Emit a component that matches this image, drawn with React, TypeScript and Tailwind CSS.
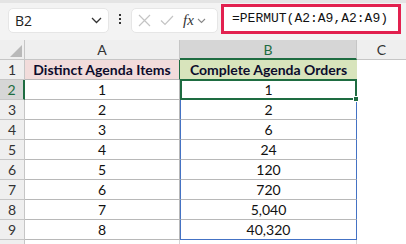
import React from 'react';

const rows = [
  { n: 1, a: 'Distinct Agenda Items', b: 'Complete Agenda Orders' },
  { n: 2, a: '1', b: '1' },
  { n: 3, a: '2', b: '2' },
  { n: 4, a: '3', b: '6' },
  { n: 5, a: '4', b: '24' },
  { n: 6, a: '5', b: '120' },
  { n: 7, a: '6', b: '720' },
  { n: 8, a: '7', b: '5,040' },
  { n: 9, a: '8', b: '40,320' },
];

const font = { fontFamily: 'Lato, "Open Sans", sans-serif' };

export default function App() {
  return (
    <div className="w-[406px] h-[244px] overflow-hidden bg-white text-[#111]" style={font}>
      {/* formula bar */}
      <div className="h-[40px] bg-[#f3f3f3] border-t-[3px] border-[#e4e4e4] flex items-start">
        <div className="ml-[8px] mt-[5px] w-[101px] h-[25px] bg-white rounded-[5px] border border-[#e6e6e6] flex items-center justify-between px-[6px]">
          <span className="text-[14px] text-[#222]" style={{ fontFamily: '"Open Sans", sans-serif' }}>B2</span>
          <svg width="11" height="7" viewBox="0 0 11 7"><path d="M1 1l4.5 4.5L10 1" fill="none" stroke="#333" strokeWidth="1.3" /></svg>
        </div>
        <div className="w-[22px] mt-[11px] flex flex-col items-center gap-[2px]">
          <span className="w-[2px] h-[2px] bg-[#333]" />
          <span className="w-[2px] h-[2px] bg-[#333]" />
          <span className="w-[2px] h-[2px] bg-[#333]" />
        </div>
        <div className="mt-[5px] w-[87px] h-[25px] bg-white rounded-[5px] border border-[#e6e6e6] flex items-center pl-[6px] gap-[9px]">
          <svg width="13" height="13" viewBox="0 0 13 13"><path d="M1 1l11 11M12 1L1 12" stroke="#c4c4c4" strokeWidth="1.2" /></svg>
          <svg width="14" height="11" viewBox="0 0 14 11"><path d="M1 5.5l4 4L13 1" fill="none" stroke="#c4c4c4" strokeWidth="1.2" /></svg>
          <span className="flex items-center gap-[3px]">
            <span className="italic text-[15px] text-[#333] leading-none" style={{ fontFamily: '"Liberation Serif", serif' }}>fx</span>
            <svg width="9" height="6" viewBox="0 0 9 6"><path d="M1 1l3.5 3.5L8 1" fill="none" stroke="#888" strokeWidth="1.1" /></svg>
          </span>
        </div>
        <div className="ml-[3px] mt-[1px] w-[180px] h-[30px] bg-white border-[3px] border-[#e2214f] flex items-center pl-[8px]">
          <span className="text-[13px] text-[#111]" style={{ fontFamily: '"Liberation Mono", monospace' }}>=PERMUT(A2:A9,A2:A9)</span>
        </div>
      </div>

      {/* sheet */}
      <div className="grid grid-cols-[25px_155px_177px_49px] auto-rows-[20px] text-[14px]">
        <div className="bg-[#efefef] border-r border-b border-[#c6c6c6] flex items-end justify-end p-[2px]">
          <svg width="12" height="12" viewBox="0 0 12 12"><path d="M12 0V12H0Z" fill="#b9b9b9" /></svg>
        </div>
        <div className="bg-[#efefef] border-r border-b border-[#c6c6c6] flex items-center justify-center text-[#333]">A</div>
        <div className="bg-[#d6d6d6] border-r border-[#c6c6c6] border-b-2 border-b-[#1e6c41] flex items-center justify-center text-[#1e6c41]">B</div>
        <div className="bg-[#efefef] border-b border-[#c6c6c6] flex items-center justify-center text-[#333]">C</div>

        {rows.map((r) => {
          const head = r.n === 1;
          const sel = r.n === 2;
          return (
            <React.Fragment key={r.n}>
              <div className={sel ? 'bg-[#d6d6d6] border-r-2 border-r-[#1e6c41] border-b border-b-[#c6c6c6] flex items-center justify-center text-[#1e6c41]' : 'bg-[#efefef] border-r border-b border-[#c6c6c6] flex items-center justify-center text-[#333]'}>{r.n}</div>
              <div className={head ? 'bg-[#f2dcdb] border-r border-b border-[#b8b8b8] flex items-center justify-center font-bold text-[#0c0c2c]' : 'border-r border-b border-[#b8b8b8] flex items-center justify-center'}>{r.a}</div>
              {head ? (
                <div className="bg-[#d8e4bc] border-l border-l-[#1e6c41] border-b border-b-[#b8b8b8] flex items-center justify-center font-bold text-[#0c0c2c] whitespace-nowrap -ml-px">{r.b}</div>
              ) : sel ? (
                <div className="relative border-2 border-[#1e6c41] -mt-px flex items-center justify-center h-[21px]">
                  {r.b}
                  <span className="absolute -right-[4px] -bottom-[4px] w-[6px] h-[6px] bg-[#1e6c41] border border-white" />
                </div>
              ) : (
                <div className={'border-l border-r border-[#4472c4] border-b flex items-center justify-center ' + (r.n === 9 ? 'border-b-[#4472c4]' : 'border-b-[#b8b8b8]')}>{r.b}</div>
              )}
              <div className="bg-white" />
            </React.Fragment>
          );
        })}
        <div className="bg-[#efefef] border-r border-[#c6c6c6]" />
        <div className="border-r border-[#d4d4d4]" />
        <div className="border-r border-[#d4d4d4]" />
        <div />
      </div>
    </div>
  );
}
